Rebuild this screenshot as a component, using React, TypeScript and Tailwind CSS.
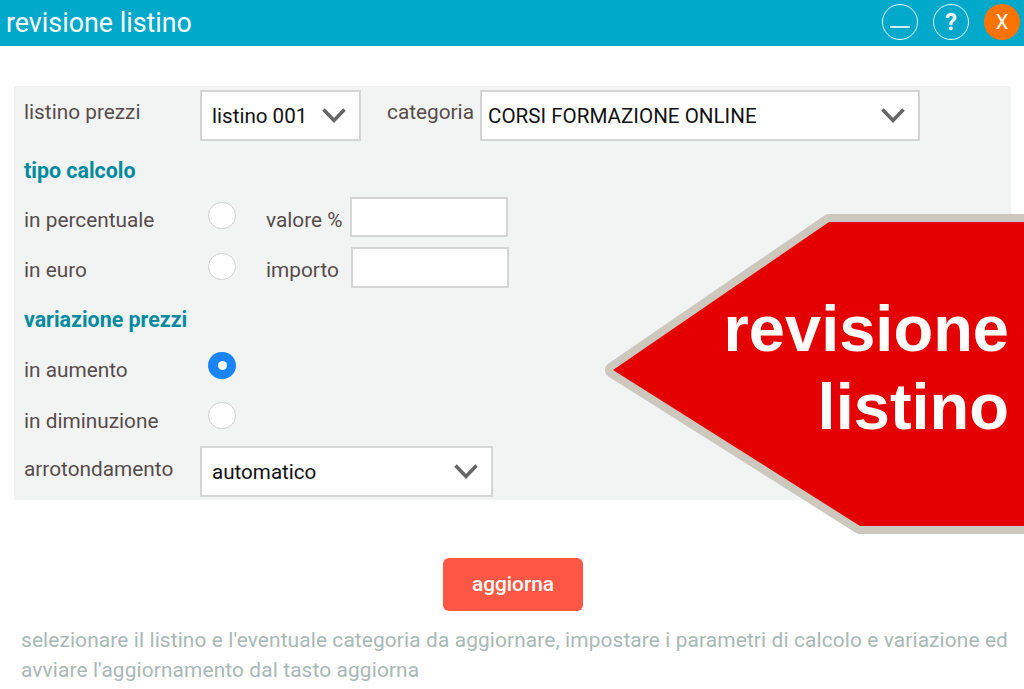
function Chevron() {
  return (
    <svg width="24" height="15" viewBox="0 0 24 15" fill="none" className="shrink-0">
      <path d="M1.5 1.5 L12 12.5 L22.5 1.5" stroke="#666" strokeWidth="3.5" />
    </svg>
  )
}

function Select({ value, className }: { value: string; className: string }) {
  return (
    <div className={`h-[51px] bg-white border-2 border-[#d5d5d5] flex items-center justify-between ${className}`}>
      <span className="text-[20.6px] text-[#111] mt-[2px]">{value}</span>
      <Chevron />
    </div>
  )
}

function Radio({ checked }: { checked?: boolean }) {
  return checked ? (
    <span className="w-[28px] h-[27px] ml-[1px] mb-[3px] rounded-full bg-[#1a84ff] flex items-center justify-center shrink-0">
      <span className="w-[9px] h-[9px] rounded-full bg-white" />
    </span>
  ) : (
    <span className="w-[28px] h-[27px] ml-[1px] mb-[3px] rounded-full bg-white border border-[#cfcfcf] shrink-0" />
  )
}

function RoundButton({ children }: { children: React.ReactNode }) {
  return (
    <div className="w-[36px] h-[36px] rounded-full border-[1.5px] border-white/90 flex items-center justify-center text-white">
      {children}
    </div>
  )
}

const labelClass = 'text-[20.8px] text-[#574c4c] leading-none'
const headingClass = 'h-[20px] text-[21.4px] font-bold text-[#008a9e] leading-[20px]'

export default function App() {
  return (
    <div className="relative w-[1024px] h-[689px] bg-white overflow-hidden font-['Roboto',sans-serif]">
      {/* Title bar */}
      <div className="h-[46px] bg-[#00a9c9] flex items-center justify-between pl-[6px] pr-[4px]">
        <h1 className="text-[26.8px] text-white leading-none">revisione listino</h1>
        <div className="flex items-center gap-[15px] mb-[3px]">
          <RoundButton>
            <span className="w-[20px] h-[2px] bg-white/80 mt-[10px]" />
          </RoundButton>
          <RoundButton>
            <span className="text-[24px] font-bold leading-none">?</span>
          </RoundButton>
          <div className="w-[36px] h-[36px] rounded-full bg-[#ff7300] flex items-center justify-center text-white text-[20px] leading-none">
            X
          </div>
        </div>
      </div>

      {/* Form panel */}
      <div className="mt-[40px] mx-[14px] w-[997px] h-[414px] bg-[#f2f4f4] pl-[10px] pt-[4px] flex flex-col">
        <div className="flex">
          <span className={`${labelClass} w-[176px] mt-[12px]`}>listino prezzi</span>
          <Select value="listino 001" className="w-[161px] pl-[10px] pr-[13px]" />
          <span className={`${labelClass} ml-[26px] w-[93px] mt-[12px]`}>categoria</span>
          <Select value="CORSI FORMAZIONE ONLINE" className="w-[440px] pl-[6px] pr-[13px]" />
        </div>

        <div className={`${headingClass} mt-[20px]`}>tipo calcolo</div>

        <div className="flex items-center mt-[16px] h-[40px]">
          <span className={`${labelClass} w-[183px] mt-[6px]`}>in percentuale</span>
          <Radio />
          <span className={`${labelClass} ml-[30px] w-[84px] mt-[6px]`}>valore %</span>
          <div className="w-[158px] h-[40px] bg-white border-2 border-[#d5d5d5]" />
        </div>
        <div className="flex items-center mt-[10px] h-[41px]">
          <span className={`${labelClass} w-[183px] mt-[5px]`}>in euro</span>
          <Radio />
          <span className={`${labelClass} ml-[30px] w-[85px] mt-[5px]`}>importo</span>
          <div className="w-[158px] h-[41px] bg-white border-2 border-[#d5d5d5]" />
        </div>

        <div className={`${headingClass} mt-[22px]`}>variazione prezzi</div>

        <div className="flex items-center mt-[22px] h-[30px]">
          <span className={`${labelClass} w-[183px] mt-[6px]`}>in aumento</span>
          <Radio checked />
        </div>
        <div className="flex items-center mt-[20px] h-[30px]">
          <span className={`${labelClass} w-[183px] mt-[8px]`}>in diminuzione</span>
          <Radio />
        </div>
        <div className="flex mt-[14px]">
          <span className={`${labelClass} w-[176px] mt-[13px]`}>arrotondamento</span>
          <Select value="automatico" className="w-[293px] pl-[10px] pr-[13px]" />
        </div>
      </div>

      {/* Button */}
      <div className="flex mt-[58px] ml-[443px]">
        <button className="w-[140px] h-[53px] rounded-[6px] bg-[#ff5745] text-white text-[20.8px] font-medium">
          aggiorna
        </button>
      </div>

      {/* Help text */}
      <p className="mt-[14px] ml-[21px] w-[1000px] text-[20.85px] leading-[30px] tracking-[0.13px] text-[#a9b8b6]">
        selezionare il listino e l'eventuale categoria da aggiornare, impostare i parametri di calcolo e variazione ed
        avviare l'aggiornamento dal tasto aggiorna
      </p>

      {/* Red arrow badge over the panel */}
      <svg className="absolute left-0 top-0 pointer-events-none" width="1024" height="689">
        <polygon
          points="613,370 829,222 1040,222 1040,526 860,526"
          fill="#e50000"
          stroke="#cdc8bd"
          strokeWidth="16"
          strokeLinejoin="round"
          paintOrder="stroke"
        />
      </svg>
      <div className="absolute right-[15px] top-[290px] text-right text-white font-bold text-[65px] leading-[78px] font-['Liberation_Sans',sans-serif]">
        revisione
        <br />
        listino
      </div>
    </div>
  )
}
